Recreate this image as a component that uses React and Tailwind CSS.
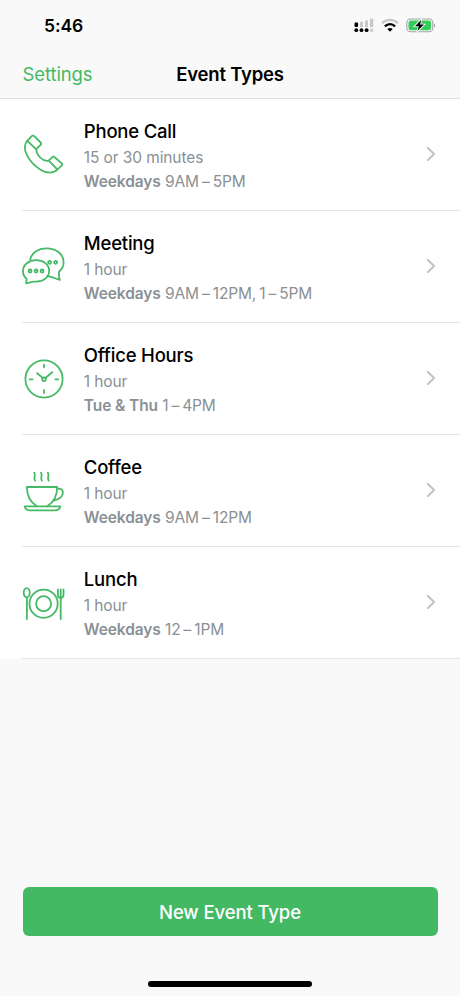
import { ChevronRight } from "lucide-react"

function IconBase({ children }) {
  return (
    <svg
      viewBox="0 0 44 44"
      className="mb-px h-11 w-11 shrink-0 text-[#46b964]"
      fill="none"
      stroke="currentColor"
      strokeWidth="1.8"
      strokeLinecap="round"
      strokeLinejoin="round"
      aria-hidden="true"
    >
      {children}
    </svg>
  )
}

function PhoneIcon() {
  return (
    <IconBase>
      <path d="M5.4 8.6 9.7 4.2Q11 3 12.3 4.2L18.6 10.5Q19.8 11.7 18.6 12.9L14.2 17.2C14.2 20 15.8 22.8 18.2 25.5C20.6 28 23.6 29.6 26.7 28.6L30.2 25.2Q31.4 24 32.6 25.2L39.5 31.1Q40.8 32.4 39.6 33.7L35.3 37.6C31 41.6 24.6 41.3 18.9 37.9C13.3 34.4 8 29.2 4.8 22.8C2.3 17.6 2 12.4 5.4 8.6Z" />
      <path d="M5.4 8.8 14 17.2M26.9 28.6 35.2 37.4" />
    </IconBase>
  )
}

function ChatIcon() {
  return (
    <IconBase>
      <path d="M8.3 15.6C9.3 9.2 15.9 4.4 24.5 4.4C34.3 4.4 41.6 10.2 41.6 18.2C41.6 22.1 39.9 25.4 37 27.8V33L37.9 35.9L32.3 34C29.9 33.3 27.5 32.4 25.3 31.8" />
      <path d="M14 16.1C21.4 16.1 27.2 20.6 27.2 26.9C27.2 33 21.4 37.7 14 37.7C12.5 37.7 11.3 37.6 10 37.8L4.2 39.5L4.6 34.8C2.2 32.9 1 29.8 1 26.9C1 20.8 6.8 16.1 14 16.1Z" />
      <circle cx="8.1" cy="27" r="1.5" />
      <circle cx="14.1" cy="27" r="1.5" />
      <circle cx="20.1" cy="27" r="1.5" />
      <circle cx="27.6" cy="18.3" r="1.5" />
      <circle cx="33.6" cy="18.3" r="1.5" />
    </IconBase>
  )
}

function ClockIcon() {
  return (
    <IconBase>
      <circle cx="22" cy="23" r="18.6" />
      <circle cx="22" cy="23.3" r="1.8" />
      <path d="M22 8.7V11.3M22 34.2V37M7.7 23.3H10.5M33.4 23.3H36.2M15.2 17.2 20.7 21.9M30.3 16.2 23.4 22" />
    </IconBase>
  )
}

function CupIcon() {
  return (
    <IconBase>
      <path d="M14.8 38.2C8.8 34.5 4.9 28.5 4.9 19H35.2C35.2 28.5 31.3 34.5 25.3 38.2" />
      <path d="M35.2 20.8C38.5 20 40.9 21.4 40.9 24.3C40.9 28.6 36.6 31.5 31.8 32.5" />
      <path d="M2.7 38.4H38.3C37.6 40.9 35.8 42.4 33 42.4H8C5.2 42.4 3.4 40.9 2.7 38.4Z" />
      <path d="M12.2 4.6C14.4 7.4 10.9 9.8 13.1 12.6M19 4.6C21.2 7.4 17.7 9.8 19.9 12.6M25.8 4.6C28 7.4 24.5 9.8 26.7 12.6" />
    </IconBase>
  )
}

function PlateIcon() {
  return (
    <IconBase>
      <circle cx="21.6" cy="23.7" r="14.1" />
      <circle cx="21.6" cy="23.7" r="7.5" />
      <ellipse cx="4.7" cy="12.8" rx="3" ry="4.6" />
      <path d="M4.9 17.6V39M38.7 18V39M38.7 9.5V18M35.9 9.5V14.5C35.9 17 37 18 38.7 18C40.4 18 41.5 17 41.5 14.5V9.5" />
    </IconBase>
  )
}

const EVENT_TYPES = [
  { title: "Phone Call", duration: "15 or 30 minutes", days: "Weekdays", hours: "9AM – 5PM", Icon: PhoneIcon },
  { title: "Meeting", duration: "1 hour", days: "Weekdays", hours: "9AM – 12PM, 1 – 5PM", Icon: ChatIcon },
  { title: "Office Hours", duration: "1 hour", days: "Tue & Thu", hours: "1 – 4PM", Icon: ClockIcon },
  { title: "Coffee", duration: "1 hour", days: "Weekdays", hours: "9AM – 12PM", Icon: CupIcon },
  { title: "Lunch", duration: "1 hour", days: "Weekdays", hours: "12 – 1PM", Icon: PlateIcon },
]

function StatusIcons() {
  return (
    <div className="flex items-center gap-[7px]" aria-hidden="true">
      <svg viewBox="0 0 20 16" className="h-4 w-5">
        <g fill="#c8c8c9">
          <rect x="6" y="3.8" width="3" height="5.4" rx="1" />
          <rect x="11" y="2.2" width="3" height="7" rx="1" />
          <rect x="16" y="0.4" width="3.2" height="8.8" rx="1" />
          <circle cx="17.6" cy="12.2" r="1.7" />
        </g>
        <rect x="0.5" y="4.6" width="3.6" height="4.3" rx="1.2" />
        <circle cx="2.3" cy="12.2" r="1.9" />
        <circle cx="7.5" cy="12.2" r="1.9" />
        <circle cx="12.6" cy="12.2" r="1.9" />
      </svg>
      <svg viewBox="0 0 18 16" className="h-4 w-[18px]" fill="none" strokeWidth="2.3">
        <path d="M1 5.2C5.6 0.8 12.4 0.8 17 5.2" stroke="#c8c8c9" />
        <path d="M3.9 8.4C6.8 5.4 11.2 5.4 14.1 8.4" stroke="#000" />
        <path d="M6.3 11C7.8 9.5 10.2 9.5 11.7 11L9 13.8Z" fill="#000" />
      </svg>
      <svg viewBox="0 0 31 16" className="h-4 w-[31px]">
        <rect x="0.8" y="1" width="26" height="12.8" rx="3.8" fill="none" stroke="#a3a3a5" strokeWidth="1.1" />
        <rect x="2.5" y="2.6" width="22.6" height="9.6" rx="2.3" fill="#35cc5a" />
        <path d="M28 5.2C29.7 6 29.7 8.8 28 9.6Z" fill="#a3a3a5" />
        <path d="M15 2 9 8.2H12.8L11.6 12.8 18 6.6H14.2Z" fill="#000" stroke="#f9f9f9" strokeWidth="1.8" paintOrder="stroke" />
      </svg>
    </div>
  )
}

function EventRow({ event }) {
  const { title, duration, days, hours, Icon } = event
  return (
    <li className="flex h-[112.1px] pl-[22.4px]">
      <div className="flex flex-1 items-center border-b border-[#e4e4e6]">
        <Icon />
        <div className="flex-1 pt-px pl-[17.4px]">
          <h2 className="text-[18.5px] leading-7 font-medium tracking-[-0.2px] text-black">{title}</h2>
          <p className="text-[15.5px] leading-[25px] tracking-[-0.1px] text-[#8b9094]">{duration}</p>
          <p className="text-[15.5px] leading-6 tracking-[-0.1px] text-[#8b9094]">
            <span className="font-semibold">{days}</span>{" "}
            <span className="tracking-[-0.15px] [word-spacing:-1.1px]">{hours}</span>
          </p>
        </div>
        <ChevronRight className="mr-[17px] mb-px h-6 w-6 text-[#c3c3c5]" strokeWidth={2.2} />
      </div>
    </li>
  )
}

export default function App() {
  return (
    <div className="flex h-[996px] w-[460px] flex-col bg-[#f9f9f9] font-['Inter',sans-serif] text-black">
      <header className="flex h-[99px] flex-col border-b border-[#dfdfe0]">
        <div className="flex h-[49px] items-center justify-between pt-[3px] pr-[23px] pl-11">
          <span className="text-[17.5px] font-semibold tracking-[-0.1px]">5:46</span>
          <StatusIcons />
        </div>
        <nav className="grid h-[49px] grid-cols-[1fr_auto_1fr] items-center px-[22.5px] pt-0.5">
          <a className="text-[18.5px] tracking-[-0.1px] text-[#46b964]">Settings</a>
          <h1 className="text-[18.5px] font-semibold tracking-[-0.2px]">Event Types</h1>
        </nav>
      </header>

      <ul className="bg-white">
        {EVENT_TYPES.map((event) => (
          <EventRow key={event.title} event={event} />
        ))}
      </ul>

      <footer className="mt-auto flex flex-col items-center px-[22.5px] pb-[9px]">
        <button
          type="button"
          className="mb-[45px] h-[49px] w-full rounded-md bg-[#43b964] pt-0.5 text-[18.5px] font-medium tracking-[-0.1px] text-white"
        >
          New Event Type
        </button>
        <div className="h-1.5 w-[164px] rounded-full bg-black" />
      </footer>
    </div>
  )
}
